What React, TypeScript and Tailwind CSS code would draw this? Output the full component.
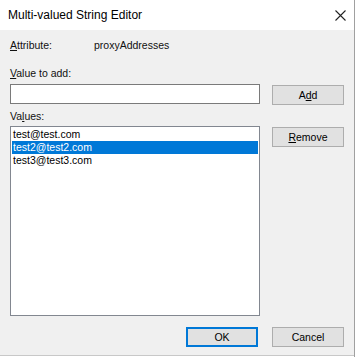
import React from 'react';

const items = ['test@test.com', 'test2@test2.com', 'test3@test3.com'];

function WinButton({ children, primary }: { children: React.ReactNode; primary?: boolean }) {
  return (
    <div
      className={
        'flex h-[20px] w-[72px] items-center justify-center bg-[#e1e1e1] text-[10.5px] leading-[13px] text-black ' +
        (primary ? 'border-2 border-[#0078d7]' : 'border border-[#adadad]')
      }
    >
      {children}
    </div>
  );
}

export default function App() {
  return (
    <div
      className="flex h-[357px] w-[360px] bg-white"
      style={{ fontFamily: '"Liberation Sans", Arial, sans-serif' }}
    >
      <div className="flex h-[357px] w-[355px] flex-col border-r border-[#a0a0a0]">
        {/* title bar */}
        <div className="flex h-[30px] items-center justify-between bg-white pl-[8px] pr-[8px]">
          <span className="text-[12px] text-black">Multi-valued String Editor</span>
          <svg width="11" height="11" viewBox="0 0 11 11" className="text-[#222]">
            <path d="M0.5 0.5 L10.5 10.5 M10.5 0.5 L0.5 10.5" stroke="currentColor" strokeWidth="1.1" fill="none" />
          </svg>
        </div>

        {/* body */}
        <div className="flex h-[326px] flex-col border-b border-[#c8c8c8] bg-[#f0f0f0] pl-[10px] text-[10.5px] leading-[14px] text-[#111]">
          <div className="mt-[8px] flex">
            <span className="w-[84px]">
              <span className="underline">A</span>ttribute:
            </span>
            <span>proxyAddresses</span>
          </div>

          <div className="mt-[14px]">
            <span className="underline">V</span>alue to add:
          </div>

          <div className="mt-[4px] flex items-start">
            <div className="h-[20px] w-[250px] border border-[#7a7a7a] bg-white" />
            <div className="ml-[12px] mt-px">
              <WinButton>
                A<span className="underline">d</span>d
              </WinButton>
            </div>
          </div>

          <div className="mt-[4px]">
            Va<span className="underline">l</span>ues:
          </div>

          <div className="mt-[3px] flex items-start">
            <div className="flex h-[190px] w-[250px] flex-col border border-[#828790] bg-white px-px pt-px">
              {items.map((it, i) => (
                <div
                  key={it}
                  className={
                    'h-[13px] pl-px leading-[13px] ' + (i === 1 ? 'bg-[#0078d7] text-white' : 'text-black')
                  }
                >
                  {it}
                </div>
              ))}
            </div>
            <div className="ml-[12px] mt-px">
              <WinButton>
                <span className="underline">R</span>emove
              </WinButton>
            </div>
          </div>

          <div className="mt-[11px] flex justify-end gap-[14px] pr-[10px]">
            <WinButton primary>OK</WinButton>
            <WinButton>Cancel</WinButton>
          </div>
        </div>
      </div>
      <div className="w-[5px] bg-white" />
    </div>
  );
}
